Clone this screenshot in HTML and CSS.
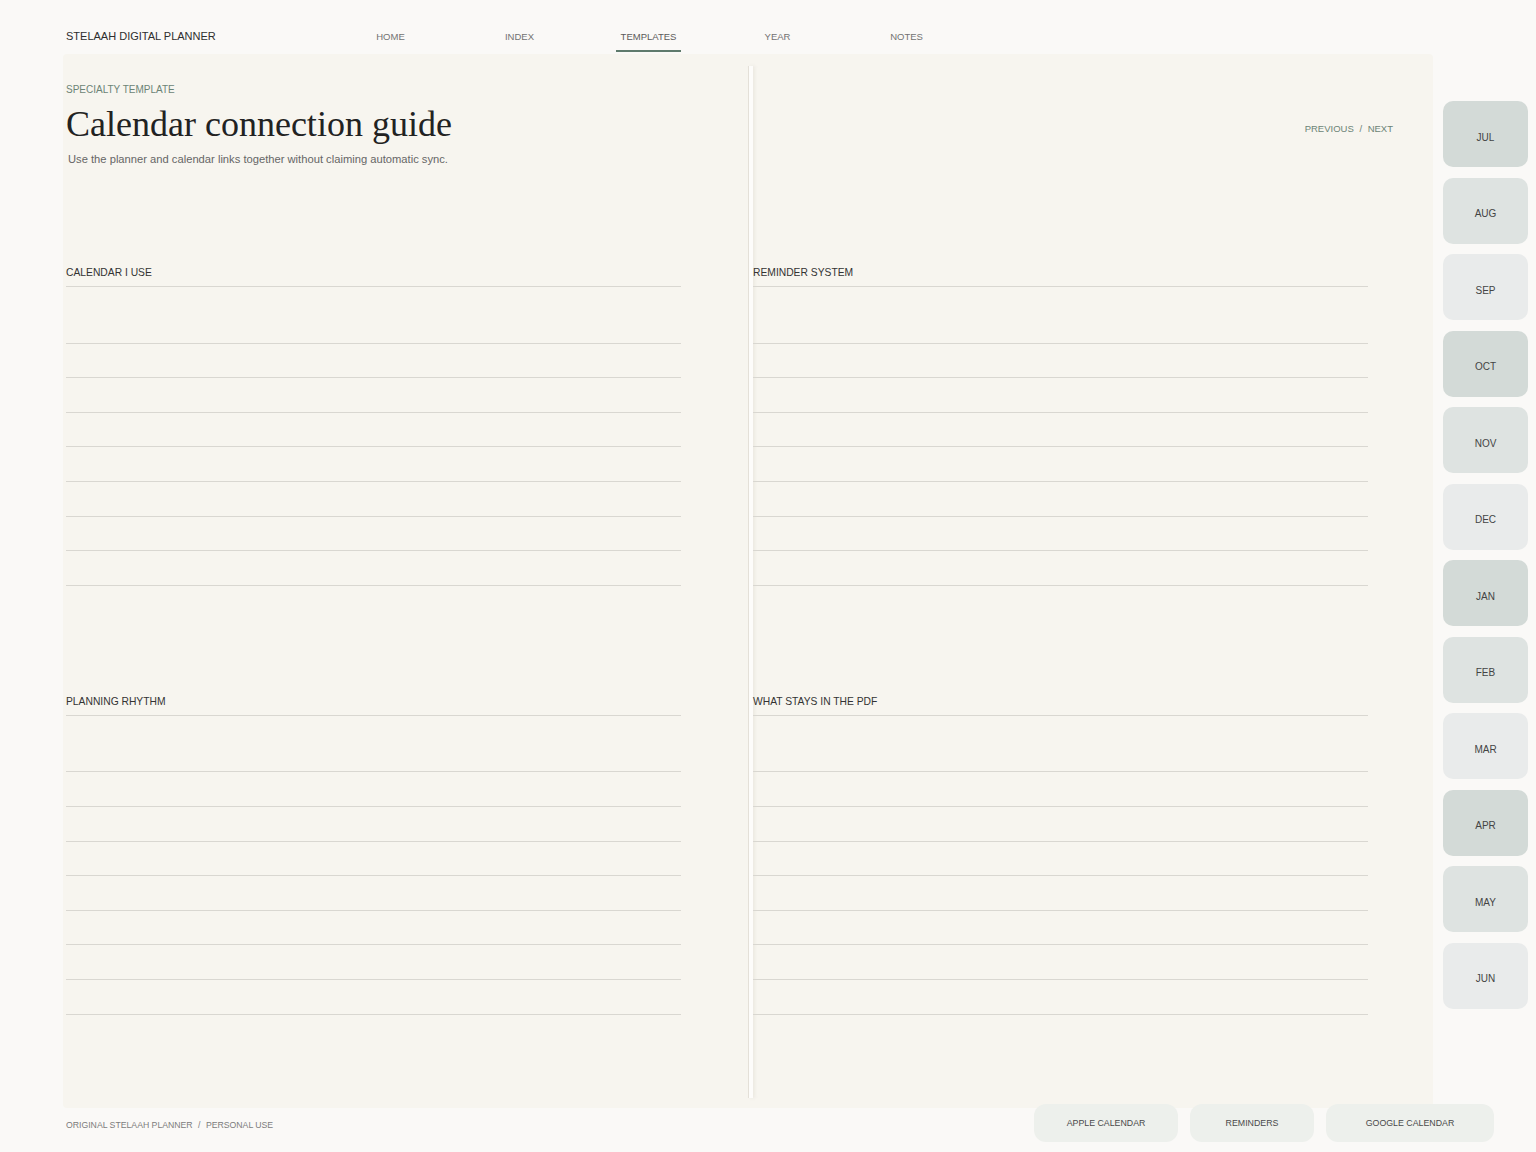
FILE: index.html
```html
<!DOCTYPE html>
<html lang="en">
<head>
  <meta charset="UTF-8" />
  <meta name="viewport" content="width=device-width, initial-scale=1.0" />
  <title>Calendar connection guide</title>
  <link rel="stylesheet" href="styles.css">
</head>
<body>
  <!-- Top Bar -->
  <header class="topbar">
    <div class="brand">STELAAH DIGITAL PLANNER</div>
    <nav class="main-nav">
      <div class="nav-item"><span>HOME</span></div>
      <div class="nav-item"><span>INDEX</span></div>
      <div class="nav-item active"><span>TEMPLATES</span></div>
      <div class="nav-item"><span>YEAR</span></div>
      <div class="nav-item"><span>NOTES</span></div>
    </nav>
  </header>

  <div class="workspace">
    <!-- Planner Spread -->
    <main class="spread">
      <section class="page page-left">
        <div class="page-head">
          <div class="eyebrow">SPECIALTY TEMPLATE</div>
          <h1 class="title">Calendar connection guide</h1>
          <p class="subtitle">Use the planner and calendar links together without claiming automatic sync.</p>
        </div>

        <div class="block">
          <div class="block-label">CALENDAR I USE</div>
          <div class="lines">
            <div class="line"></div><div class="line"></div><div class="line"></div><div class="line"></div>
            <div class="line"></div><div class="line"></div><div class="line"></div><div class="line"></div>
          </div>
        </div>

        <div class="block">
          <div class="block-label">PLANNING RHYTHM</div>
          <div class="lines">
            <div class="line"></div><div class="line"></div><div class="line"></div><div class="line"></div>
            <div class="line"></div><div class="line"></div><div class="line"></div><div class="line"></div>
          </div>
        </div>
      </section>

      <div class="spine"></div>

      <section class="page page-right">
        <div class="page-head">
          <div class="pager">PREVIOUS <span class="slash">/</span> NEXT</div>
        </div>

        <div class="block">
          <div class="block-label">REMINDER SYSTEM</div>
          <div class="lines">
            <div class="line"></div><div class="line"></div><div class="line"></div><div class="line"></div>
            <div class="line"></div><div class="line"></div><div class="line"></div><div class="line"></div>
          </div>
        </div>

        <div class="block">
          <div class="block-label">WHAT STAYS IN THE PDF</div>
          <div class="lines">
            <div class="line"></div><div class="line"></div><div class="line"></div><div class="line"></div>
            <div class="line"></div><div class="line"></div><div class="line"></div><div class="line"></div>
          </div>
        </div>
      </section>
    </main>

    <!-- Month Tabs -->
    <aside class="month-tabs">
      <div class="tab tone-a">JUL</div>
      <div class="tab tone-b">AUG</div>
      <div class="tab tone-c">SEP</div>
      <div class="tab tone-a">OCT</div>
      <div class="tab tone-b">NOV</div>
      <div class="tab tone-c">DEC</div>
      <div class="tab tone-a">JAN</div>
      <div class="tab tone-b">FEB</div>
      <div class="tab tone-c">MAR</div>
      <div class="tab tone-a">APR</div>
      <div class="tab tone-b">MAY</div>
      <div class="tab tone-c">JUN</div>
    </aside>
  </div>

  <!-- Footer -->
  <footer class="footer">
    <div class="credit">ORIGINAL STELAAH PLANNER <span class="slash">/</span> PERSONAL USE</div>
    <div class="links">
      <div class="link-btn btn-apple">APPLE CALENDAR</div>
      <div class="link-btn btn-reminders">REMINDERS</div>
      <div class="link-btn btn-google">GOOGLE CALENDAR</div>
    </div>
  </footer>
</body>
</html>
```

FILE: styles.css
```css
body {
  font-family: "Liberation Sans", Arial, sans-serif;
  background-color: #faf9f7;
  color: #333;
  margin: 0;
  padding: 0;
}
/* Top Bar */
.topbar {
  display: flex;
  align-items: flex-start;
  height: 54px;
  padding-left: 66px;
  box-sizing: border-box;
}
.brand {
  width: 260px;
  padding-top: 30px;
  font-size: 11px;
  line-height: 12px;
  color: #2e2e2e;
}
.main-nav {
  display: flex;
  padding-top: 31px;
}
.nav-item {
  width: 129px;
  text-align: center;
  font-size: 9.5px;
  line-height: 12px;
  color: #727272;
}
.nav-item span {
  display: inline-block;
  padding: 0 5px 7px;
  border-bottom: 2px solid transparent;
}
.nav-item.active span {
  color: #5a5a5a;
  border-bottom-color: #5e7a6c;
}
/* Workspace */
.workspace {
  display: flex;
  align-items: flex-start;
}
.spread {
  display: grid;
  grid-template-columns: 682px 5px 1fr;
  width: 1370px;
  height: 1054px;
  margin-left: 63px;
  padding: 12px 0 10px 3px;
  box-sizing: border-box;
  background-color: #f7f5ef;
  border-radius: 4px;
}
.spine {
  border-left: 1px solid #e4e0d8;
  background-color: #fdfcfa;
  box-shadow: 2px 0 3px rgba(230, 226, 218, 0.6);
}
.page-head {
  height: 200px;
  box-sizing: border-box;
  padding-top: 18px;
}
.page-right .page-head {
  display: flex;
  justify-content: flex-end;
  padding: 0 40px 0 0;
}
.eyebrow {
  font-size: 10px;
  line-height: 12px;
  color: #6c8476;
}
.title {
  margin: 8px 0 0;
  font-family: "Liberation Serif", "Times New Roman", serif;
  font-weight: normal;
  font-size: 36px;
  line-height: 41px;
  color: #222;
}
.subtitle {
  margin: 7px 0 0 2px;
  font-size: 11.2px;
  line-height: 14px;
  color: #666;
}
.pager {
  margin-top: 57px;
  font-size: 9.5px;
  line-height: 12px;
  color: #6c8476;
}
.slash {
  margin: 0 3px;
}
/* Writing Blocks */
.block {
  width: 615px;
}
.block + .block {
  margin-top: 109px;
}
.block-label {
  font-size: 10.3px;
  line-height: 12px;
  padding: 1px 0 7px;
  color: #333;
  border-bottom: 1px solid #d9d7d1;
}
.lines {
  margin-top: 22px;
}
.line {
  height: 34.6px;
  box-sizing: border-box;
  border-bottom: 1px solid #d9d7d1;
}
/* Month Tabs */
.month-tabs {
  display: flex;
  flex-direction: column;
  gap: 10.5px;
  margin-left: 10px;
  padding-top: 47px;
}
.tab {
  width: 85px;
  height: 66px;
  border-radius: 10px;
  display: flex;
  justify-content: center;
  align-items: center;
  padding-top: 6px;
  box-sizing: border-box;
  font-size: 10px;
  color: #444;
}
.tone-a { background-color: #d3dad7; }
.tone-b { background-color: #dee3e1; }
.tone-c { background-color: #e9ebeb; }
/* Footer */
.footer {
  display: flex;
  justify-content: space-between;
  align-items: center;
  margin-top: -4px;
  padding: 0 42px 0 66px;
}
.credit {
  padding-top: 4px;
  font-size: 8.7px;
  color: #7c7c7c;
}
.links {
  display: flex;
  gap: 12px;
}
.link-btn {
  height: 38px;
  display: flex;
  justify-content: center;
  align-items: center;
  border-radius: 12px;
  background-color: #edf0ec;
  font-size: 8.8px;
  color: #4a4a4a;
}
.btn-apple { width: 144px; }
.btn-reminders { width: 124px; }
.btn-google { width: 168px; }
```
